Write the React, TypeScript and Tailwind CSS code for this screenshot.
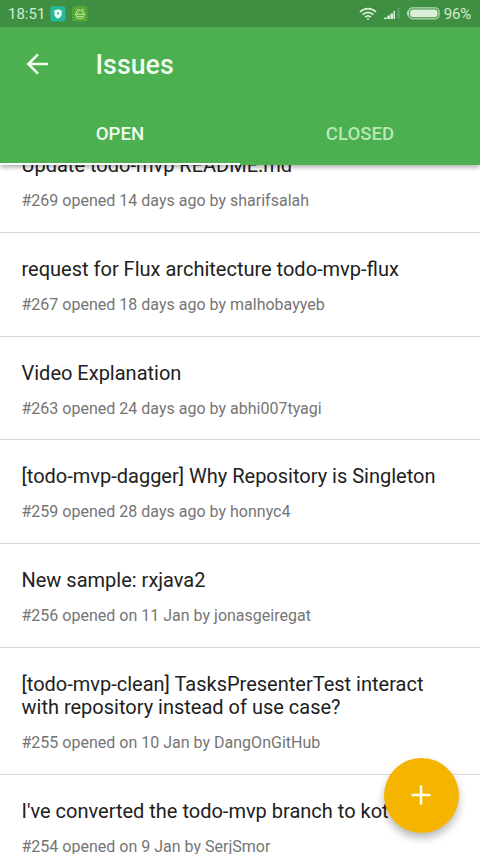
interface Issue {
  title: string;
  detail: string;
}

const issues: Issue[] = [
  { title: "Update todo-mvp README.md", detail: "#269 opened 14 days ago by sharifsalah" },
  { title: "request for Flux architecture todo-mvp-flux", detail: "#267 opened 18 days ago by malhobayyeb" },
  { title: "Video Explanation", detail: "#263 opened 24 days ago by abhi007tyagi" },
  { title: "[todo-mvp-dagger] Why Repository is Singleton", detail: "#259 opened 28 days ago by honnyc4" },
  { title: "New sample: rxjava2", detail: "#256 opened on 11 Jan by jonasgeiregat" },
  { title: "[todo-mvp-clean] TasksPresenterTest interact with repository instead of use case?", detail: "#255 opened on 10 Jan by DangOnGitHub" },
  { title: "I've converted the todo-mvp branch to kot", detail: "#254 opened on 9 Jan by SerjSmor" },
];

function ShieldIcon() {
  return (
    <svg width="16" height="16" viewBox="0 0 16 16">
      <rect x="0.3" y="0.3" width="15.2" height="15.2" rx="2.5" fill="#26b89a" />
      <path d="M8 3.3 11.7 4.6V8c0 2.1-1.5 3.7-3.7 4.7C5.8 11.7 4.3 10.1 4.3 8V4.6Z" fill="#e8fff6" />
      <circle cx="8" cy="7.4" r="1.1" fill="#26b89a" />
    </svg>
  );
}

function RobotIcon() {
  return (
    <svg width="16" height="16" viewBox="0 0 16 16">
      <rect x="0.3" y="0.3" width="15.2" height="15.2" rx="2.5" fill="#56a836" />
      <g fill="none" stroke="#c0ea98" strokeWidth="1" strokeLinecap="round">
        <rect x="4" y="4.2" width="8" height="8.5" rx="3.5" />
        <path d="m4.8 2.9 1.2 1.5M11.2 2.9 10 4.4M3.2 8.3h9.6M6 10.5h4M6.3 6.4h.1M9.6 6.4h.1" />
      </g>
    </svg>
  );
}

function StatusBar() {
  return (
    <div className="flex h-[27px] items-center bg-[#3f8f42] pl-2 pr-[9px] text-[15px] text-[#d3ecd1]">
      <span className="w-[42px] pt-px leading-[27px]">18:51</span>
      <span className="flex gap-[5.5px]">
        <ShieldIcon />
        <RobotIcon />
      </span>
      <svg className="ml-auto" width="18" height="14" viewBox="0 0 18 14" fill="none" stroke="#d9efd8" strokeWidth="1.7">
        <path d="M1 5C5.5.5 12.5.5 17 5M3.7 7.7c3-3 7.6-3 10.6 0M6.2 10.2c1.6-1.5 4-1.5 5.6 0" />
        <circle cx="9" cy="12" r="1" fill="#d9efd8" stroke="none" />
      </svg>
      <svg className="ml-[7px]" width="17" height="12" viewBox="0 0 17 12" fill="#d9efd8">
        <path d="M0 9.5h2.7V11H0zM3.3 7.5H6V11H3.3zM6.5 5.5h2.5V11H6.5zM9.5 3H11v8H9.5z" />
        <path d="M13.5 0h2v11h-2z" opacity=".2" />
      </svg>
      <svg className="ml-[6px]" width="33" height="13" viewBox="0 0 33 13">
        <rect x="1.6" y="0.8" width="30.5" height="11" rx="4" fill="none" stroke="#b7dcb5" strokeWidth="1.2" />
        <rect x="3.2" y="2.4" width="27.3" height="7.8" rx="2.7" fill="#d9efd8" />
        <path d="M.7 4v4.5" stroke="#b7dcb5" strokeWidth="1.2" />
      </svg>
      <span className="ml-[3.5px] pt-px text-[15px] tracking-[-0.2px]">96%</span>
    </div>
  );
}

function AppBar() {
  return (
    <header className="relative z-10 h-[165px] shrink-0 bg-[#4caf50] shadow-[0_2px_5px_rgba(0,0,0,0.35)]">
      <StatusBar />
      <div className="flex h-[75px] items-center pl-[26px]">
        <svg className="-mt-px" width="22" height="22" viewBox="0 0 22 22" fill="none" stroke="#f1fbef" strokeWidth="2.6">
          <path d="M22 11H2.5M12 1.3 2.3 11 12 20.7" />
        </svg>
        <h1 className="ml-[47.5px] pt-px text-[26.8px] font-medium leading-[30px] text-[#effbed]">Issues</h1>
      </div>
      <nav className="grid h-[63px] grid-cols-2 text-center text-[18.6px] font-medium leading-[58px]">
        <div className="border-b-2 border-white pt-[3px] text-[#effbed]">OPEN</div>
        <div className="pt-[3px] text-[#b9e8b5]">CLOSED</div>
      </nav>
    </header>
  );
}

export default function App() {
  return (
    <div className="relative flex h-[854px] w-[480px] flex-col overflow-hidden bg-white font-[Roboto,sans-serif]">
      <AppBar />
      <main className="-mt-[35.8px]">
        {issues.map((issue) => (
          <article key={issue.detail} className="border-b-[1.5px] border-[#dadada] px-[21.5px] pb-[21.7px] pt-[25px]">
            <h2 className="text-[20px] leading-[23.5px] text-[#212121]">{issue.title}</h2>
            <p className="mt-[13.5px] text-[16.03px] leading-[19px] text-[#757575]">{issue.detail}</p>
          </article>
        ))}
      </main>
      <button aria-label="New issue" className="absolute bottom-[21.5px] right-[21px] z-20 flex size-[75px] items-center justify-center rounded-full bg-[#f4b400] shadow-[0_5px_9px_rgba(0,0,0,0.28)]">
        <svg className="-ml-px" width="20" height="20" viewBox="0 0 20 20" stroke="#fffdf0" strokeWidth="2.6">
          <path d="M10 .5v19M.5 10h19" />
        </svg>
      </button>
    </div>
  );
}
